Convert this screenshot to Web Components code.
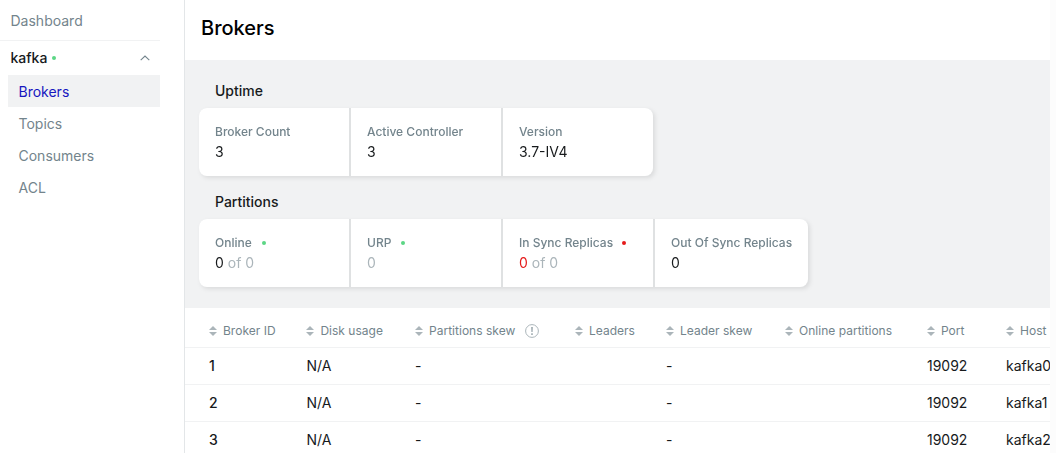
<!DOCTYPE html>
<html lang="en">
<head>
<meta charset="utf-8">
<title>Brokers</title>
<style>
html,body{margin:0;height:100%;overflow:hidden;background:#fcfcfc}
body{font-family:Inter,sans-serif;font-size:14px;color:#171a1c}
</style>
</head>
<body>
<app-shell>
  <side-nav slot="nav">
    <nav-top slot="top">Dashboard</nav-top>
    <cluster-head slot="head">kafka</cluster-head>
    <nav-item active>Brokers</nav-item>
    <nav-item>Topics</nav-item>
    <nav-item>Consumers</nav-item>
    <nav-item>ACL</nav-item>
  </side-nav>
  <page-title>Brokers</page-title>
  <metrics-panel>
    <metrics-section>
      <span slot="title">Uptime</span>
      <metric-card label="Broker Count">3</metric-card>
      <metric-card label="Active Controller">3</metric-card>
      <metric-card label="Version">3.7-IV4</metric-card>
    </metrics-section>
    <metrics-section>
      <span slot="title">Partitions</span>
      <metric-card label="Online" status="ok">0<span slot="extra">of 0</span></metric-card>
      <metric-card label="URP" status="ok" muted>0</metric-card>
      <metric-card label="In Sync Replicas" status="bad" alert>0<span slot="extra">of 0</span></metric-card>
      <metric-card label="Out Of Sync Replicas">0</metric-card>
    </metrics-section>
  </metrics-panel>
  <brokers-table></brokers-table>
</app-shell>
<script>
function define(name, html, setup) {
  const template = document.createElement('template');
  template.innerHTML = html;
  customElements.define(name, class extends HTMLElement {
    constructor() {
      super();
      this.attachShadow({mode: 'open'}).append(template.content.cloneNode(true));
    }
    connectedCallback() { if (setup) setup(this, this.shadowRoot); }
  });
}

define('app-shell', `<style>
  :host{display:flex;width:1050px;height:453px;overflow:hidden;background:#fff}
  main{flex:1;min-width:0;overflow:hidden}
</style><slot name="nav"></slot><main><slot></slot></main>`);

define('side-nav', `<style>
  :host{display:block;box-sizing:border-box;width:185px;flex:none;border-right:1px solid #e3e6e8;padding-right:24px}
  .items{padding-left:8px}
</style><slot name="top"></slot><slot name="head"></slot><div class="items"><slot></slot></div>`);

define('nav-top', `<style>
  :host{display:block;box-sizing:border-box;height:41px;padding:11px 0 0 10.5px;line-height:20px;color:#73848c;border-bottom:1px solid #f1f2f3}
</style><slot></slot>`);

define('cluster-head', `<style>
  :host{display:flex;align-items:center;height:34px;padding:0 10px 0 10.5px;font-weight:450;line-height:20px}
  i{width:4px;height:4px;border-radius:50%;background:#5cd685;margin-left:5px}
  svg{margin-left:auto;display:block}
</style><slot></slot><i></i><svg width="10" height="6" viewBox="0 0 10 6" fill="none" stroke="#73848c" stroke-width="1.1"><path d="M.7 5.2 5 1l4.3 4.2"/></svg>`);

define('nav-item', `<style>
  :host{display:block;height:32px;padding:0 10.5px;line-height:33px;color:#73848c}
  :host([active]){background:#f1f2f3;color:#1717bf}
</style><slot></slot>`);

define('page-title', `<style>
  :host{display:block;box-sizing:border-box;height:60px;padding:12px 16px;font-size:20px;line-height:32px;font-weight:500;color:#000}
</style><slot></slot>`);

define('metrics-panel', `<style>
  :host{display:flex;flex-direction:column;gap:16px;box-sizing:border-box;height:248px;padding:21px 14px 0;background:#f1f2f3}
</style><slot></slot>`);

define('metrics-section', `<style>
  :host{display:block}
  .title{height:27px;padding-left:16px;font-weight:500;line-height:20px}
  .cards{display:flex;gap:2px;width:max-content;border-radius:8px;overflow:hidden;background:#dfe1e2}
  .shadow{filter:drop-shadow(2px 2px 2px rgba(0,0,0,.09))}
</style><div class="title"><slot name="title"></slot></div><div class="shadow"><div class="cards"><slot></slot></div></div>`);

define('metric-card', `<style>
  :host{display:block;box-sizing:border-box;min-width:150px;height:68px;padding:14px 16px 0;background:#fff}
  .label{display:flex;align-items:center;height:20px;font-size:12px;font-weight:500;line-height:20px;color:#73848c;white-space:nowrap}
  .label span{height:20px}
  i{display:none;width:4px;height:4px;border-radius:50%;margin-left:10px}
  :host([status]) i{display:block;background:#5cd685}
  :host([status=bad]) i{background:#e51a1a;margin-left:9px}
  .value{height:20px;line-height:20px}
  :host([muted]) .value,::slotted(span){color:#abb5ba}
  ::slotted(span){margin-left:4px}
  :host([alert]) .value{color:#e51a1a}
</style><div class="label"><span></span><i></i></div><div class="value"><slot></slot><slot name="extra"></slot></div>`,
(el, root) => { root.querySelector('.label span').textContent = el.getAttribute('label'); });

define('sort-header', `<style>
  :host{display:flex;align-items:center;gap:6px;font-size:12px;color:#73848c;letter-spacing:.02px;white-space:nowrap}
  .sort{width:8px;height:10px;flex:none}
  .info{display:none;width:14px;height:14px;margin-left:4px}
  :host([info]) .info{display:block}
</style><svg class="sort" viewBox="0 0 8 10" fill="#abb5ba"><path d="M0 4h8L4 0ZM0 6h8l-4 4Z"/></svg><slot></slot>
<svg class="info" viewBox="0 0 14 14"><circle cx="7" cy="7" r="6.4" fill="none" stroke="#abb5ba"/><path d="M6 3h2l-.3 5H6.3ZM6.1 9.2h1.8v1.8H6.1Z" fill="#abb5ba"/></svg>`);

define('brokers-table', `<style>
  :host{display:block}
  .row{display:grid;grid-template-columns:97.4px 108.6px 160px 91px 119px 142px 79px 60px;box-sizing:border-box;height:37px;padding-left:24px;align-items:center;border-bottom:1px solid #f1f2f3;line-height:20px;white-space:nowrap}
  .head{height:40px;padding-top:6px}
  .row>span:first-child{font-weight:500}
</style><div class="row head"></div>`, (el, root) => {
  const head = root.querySelector('.head');
  for (const name of ['Broker ID', 'Disk usage', 'Partitions skew', 'Leaders', 'Leader skew', 'Online partitions', 'Port', 'Host']) {
    const cell = document.createElement('sort-header');
    cell.textContent = name;
    if (name === 'Partitions skew') cell.setAttribute('info', '');
    head.append(cell);
  }
  for (const id of [1, 2, 3]) {
    const row = document.createElement('div');
    row.className = 'row';
    for (const value of [id, 'N/A', '-', '', '-', '', '19092', 'kafka' + (id - 1)]) {
      const cell = document.createElement('span');
      cell.textContent = value;
      row.append(cell);
    }
    root.append(row);
  }
});
</script>
</body>
</html>
